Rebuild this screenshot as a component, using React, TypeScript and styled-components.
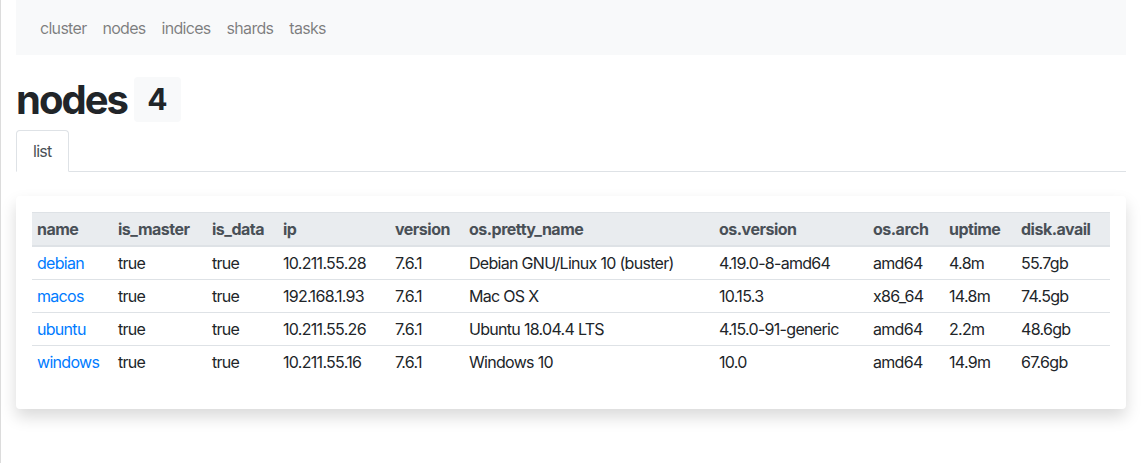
import styled, { createGlobalStyle } from "styled-components";

const GlobalStyle = createGlobalStyle`
  html, body {
    margin: 0;
    padding: 0;
    background: #fff;
  }
  body {
    font-family: Inter, "Liberation Sans", Arial, sans-serif;
    font-size: 16px;
    line-height: 1.5;
    color: #212529;
    letter-spacing: -0.7px;
  }
`;

interface Node {
  name: string;
  ip: string;
  prettyName: string;
  osVersion: string;
  arch: string;
  uptime: string;
  disk: string;
}

const nodes: Node[] = [
  { name: "debian", ip: "10.211.55.28", prettyName: "Debian GNU/Linux 10 (buster)", osVersion: "4.19.0-8-amd64", arch: "amd64", uptime: "4.8m", disk: "55.7gb" },
  { name: "macos", ip: "192.168.1.93", prettyName: "Mac OS X", osVersion: "10.15.3", arch: "x86_64", uptime: "14.8m", disk: "74.5gb" },
  { name: "ubuntu", ip: "10.211.55.26", prettyName: "Ubuntu 18.04.4 LTS", osVersion: "4.15.0-91-generic", arch: "amd64", uptime: "2.2m", disk: "48.6gb" },
  { name: "windows", ip: "10.211.55.16", prettyName: "Windows 10", osVersion: "10.0", arch: "amd64", uptime: "14.9m", disk: "67.6gb" },
];

const columns: [string, number][] = [
  ["name", 81],
  ["is_master", 94],
  ["is_data", 71],
  ["ip", 112],
  ["version", 74],
  ["os.pretty_name", 250],
  ["os.version", 154],
  ["os.arch", 76],
  ["uptime", 72],
  ["disk.avail", 94],
];

const links = ["cluster", "nodes", "indices", "shards", "tasks"];

const App = () => {
  return (
    <Page>
      <GlobalStyle />
      <Container>
        <NavBar>
          {links.map((l) => (
            <NavLink key={l} href="#">
              {l}
            </NavLink>
          ))}
        </NavBar>
        <Heading>
          nodes <Badge>4</Badge>
        </Heading>
        <Tabs>
          <Tab>list</Tab>
        </Tabs>
        <Card>
          <Table>
            <colgroup>
              {columns.map(([c, w]) => (
                <Col key={c} $width={w} />
              ))}
            </colgroup>
            <thead>
              <tr>
                {columns.map(([c]) => (
                  <Th key={c}>{c}</Th>
                ))}
              </tr>
            </thead>
            <tbody>
              {nodes.map((n) => (
                <tr key={n.name}>
                  <Td>
                    <NodeLink href="#">{n.name}</NodeLink>
                  </Td>
                  <Td>true</Td>
                  <Td>true</Td>
                  <Td>{n.ip}</Td>
                  <Td>7.6.1</Td>
                  <Td>{n.prettyName}</Td>
                  <Td>{n.osVersion}</Td>
                  <Td>{n.arch}</Td>
                  <Td>{n.uptime}</Td>
                  <Td>{n.disk}</Td>
                </tr>
              ))}
            </tbody>
          </Table>
        </Card>
      </Container>
    </Page>
  );
};

const Page = styled.div`
  min-height: 463px;
  border-left: 1px solid #dcdcdc;
  box-sizing: border-box;
`;

const Container = styled.div`
  width: 1110px;
  padding-left: 15px;
`;

const NavBar = styled.nav`
  display: flex;
  background-color: #f8f9fa;
  padding: 8px 16px;
  height: 55px;
  box-sizing: border-box;
  align-items: center;
`;

const NavLink = styled.a`
  padding: 0 8px;
  color: rgba(0, 0, 0, 0.5);
  text-decoration: none;
  line-height: 24px;
`;

const Heading = styled.h1`
  font-size: 40px;
  font-weight: 700;
  line-height: 48px;
  margin: 21px 0 6px;
  letter-spacing: -2px;
`;

const Badge = styled.span`
  display: inline-block;
  font-size: 30px;
  line-height: 1;
  padding: 7.5px 13px;
  background-color: #f8f9fa;
  border-radius: 4px;
  vertical-align: 4px;
  letter-spacing: 0;
`;

const Tabs = styled.div`
  display: flex;
  border-bottom: 1px solid #dee2e6;
`;

const Tab = styled.div`
  padding: 8px 16px;
  border: 1px solid #dee2e6;
  border-bottom-color: #fff;
  border-top-left-radius: 4px;
  border-top-right-radius: 4px;
  margin-bottom: -1px;
  color: #495057;
  background: #fff;
`;

const Card = styled.div`
  margin-top: 24px;
  padding: 16px;
  background: #fff;
  border-radius: 4px;
  box-shadow: 0 8px 16px rgba(0, 0, 0, 0.15);
`;

const Table = styled.table`
  width: 100%;
  table-layout: fixed;
  border-collapse: collapse;
  margin-bottom: 15px;
`;

const Col = styled.col<{ $width: number }>`
  width: ${(p) => p.$width}px;
`;

const Th = styled.th`
  text-align: left;
  font-weight: 700;
  color: #495057;
  background-color: #e9ecef;
  padding: 4px 5px;
  line-height: 24px;
  border-top: 1px solid #dee2e6;
  border-bottom: 2px solid #dee2e6;
  white-space: nowrap;
  letter-spacing: -0.5px;
`;

const Td = styled.td`
  padding: 4px 5px;
  line-height: 24px;
  border-top: 1px solid #dee2e6;
  white-space: nowrap;
  tr:first-child > & {
    border-top: none;
  }
`;

const NodeLink = styled.a`
  color: #007bff;
  text-decoration: none;
`;

export default App;
